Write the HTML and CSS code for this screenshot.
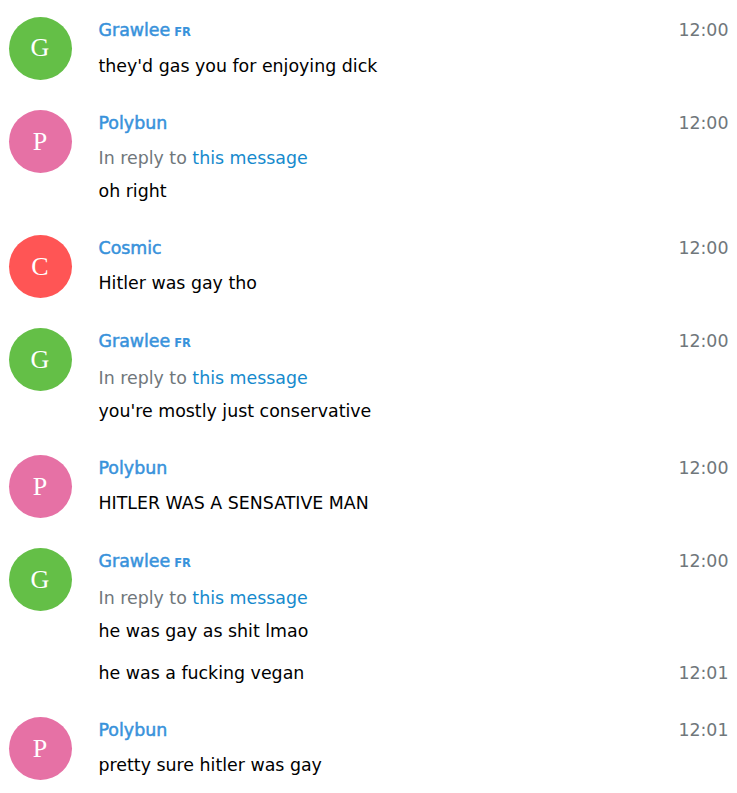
FILE: index.html
```html
<!DOCTYPE html>
<html>
<head>
<meta charset="utf-8">
<link rel="stylesheet" href="styles.css">
</head>
<body>
<div class="history">
  <div class="message">
    <div class="userpic green"><span class="initials">G</span></div>
    <div class="body">
      <div class="head"><div class="from">Grawlee<span class="sig">FR</span></div><div class="date">12:00</div></div>
      <div class="text">they'd gas you for enjoying dick</div>
    </div>
  </div>
  <div class="message">
    <div class="userpic pink"><span class="initials">P</span></div>
    <div class="body">
      <div class="head"><div class="from">Polybun</div><div class="date">12:00</div></div>
      <div class="reply">In reply to <a class="link">this message</a></div>
      <div class="text">oh right</div>
    </div>
  </div>
  <div class="message">
    <div class="userpic red"><span class="initials">C</span></div>
    <div class="body">
      <div class="head"><div class="from">Cosmic</div><div class="date">12:00</div></div>
      <div class="text">Hitler was gay tho</div>
    </div>
  </div>
  <div class="message">
    <div class="userpic green"><span class="initials">G</span></div>
    <div class="body">
      <div class="head"><div class="from">Grawlee<span class="sig">FR</span></div><div class="date">12:00</div></div>
      <div class="reply">In reply to <a class="link">this message</a></div>
      <div class="text">you're mostly just conservative</div>
    </div>
  </div>
  <div class="message">
    <div class="userpic pink"><span class="initials">P</span></div>
    <div class="body">
      <div class="head"><div class="from">Polybun</div><div class="date">12:00</div></div>
      <div class="text">HITLER WAS A SENSATIVE MAN</div>
    </div>
  </div>
  <div class="message">
    <div class="userpic green"><span class="initials">G</span></div>
    <div class="body">
      <div class="head"><div class="from">Grawlee<span class="sig">FR</span></div><div class="date">12:00</div></div>
      <div class="reply">In reply to <a class="link">this message</a></div>
      <div class="text">he was gay as shit lmao</div>
    </div>
  </div>
  <div class="message joined">
    <div class="spacer"></div>
    <div class="body">
      <div class="head"><div class="text">he was a fucking vegan</div><div class="date">12:01</div></div>
    </div>
  </div>
  <div class="message">
    <div class="userpic pink"><span class="initials">P</span></div>
    <div class="body">
      <div class="head"><div class="from">Polybun</div><div class="date">12:01</div></div>
      <div class="text">pretty sure hitler was gay</div>
    </div>
  </div>
</div>
</body>
</html>
```
FILE: styles.css
```css
body {
  margin: 0;
  background: #fff;
  font-family: "DejaVu Sans", Verdana, sans-serif;
  font-size: 17.4px;
  line-height: 27px;
  color: #000;
}
.history {
  width: 720px;
  margin: 0 auto;
  padding-top: 1.5px;
}
.message {
  display: flex;
  padding: 15px 0;
}
.message.joined {
  margin-top: -15px;
}
.userpic {
  width: 63px;
  height: 63px;
  border-radius: 50%;
  flex: none;
  display: flex;
  align-items: center;
  justify-content: center;
}
.spacer {
  width: 63px;
  flex: none;
}
.green { background: #64bf47; }
.pink { background: #e671a5; }
.red { background: #ff5555; }
.initials {
  color: #fff;
  font-family: "Liberation Serif", "Times New Roman", serif;
  font-size: 26px;
  line-height: 1;
}
.body {
  flex: 1;
  margin-left: 27px;
  min-width: 0;
}
.head {
  display: flex;
  justify-content: space-between;
  align-items: baseline;
}
.from {
  color: #3892db;
  -webkit-text-stroke: 0.5px #3892db;
  padding-bottom: 7.5px;
}
.sig {
  font-size: 11.5px;
  font-weight: bold;
  -webkit-text-stroke: 0;
  margin-left: 4px;
}
.date {
  color: #70777b;
}
.reply {
  color: #70777b;
  padding-bottom: 6.5px;
}
.link {
  color: #168acd;
  text-decoration: none;
}
.text {
  color: #000;
}
```
